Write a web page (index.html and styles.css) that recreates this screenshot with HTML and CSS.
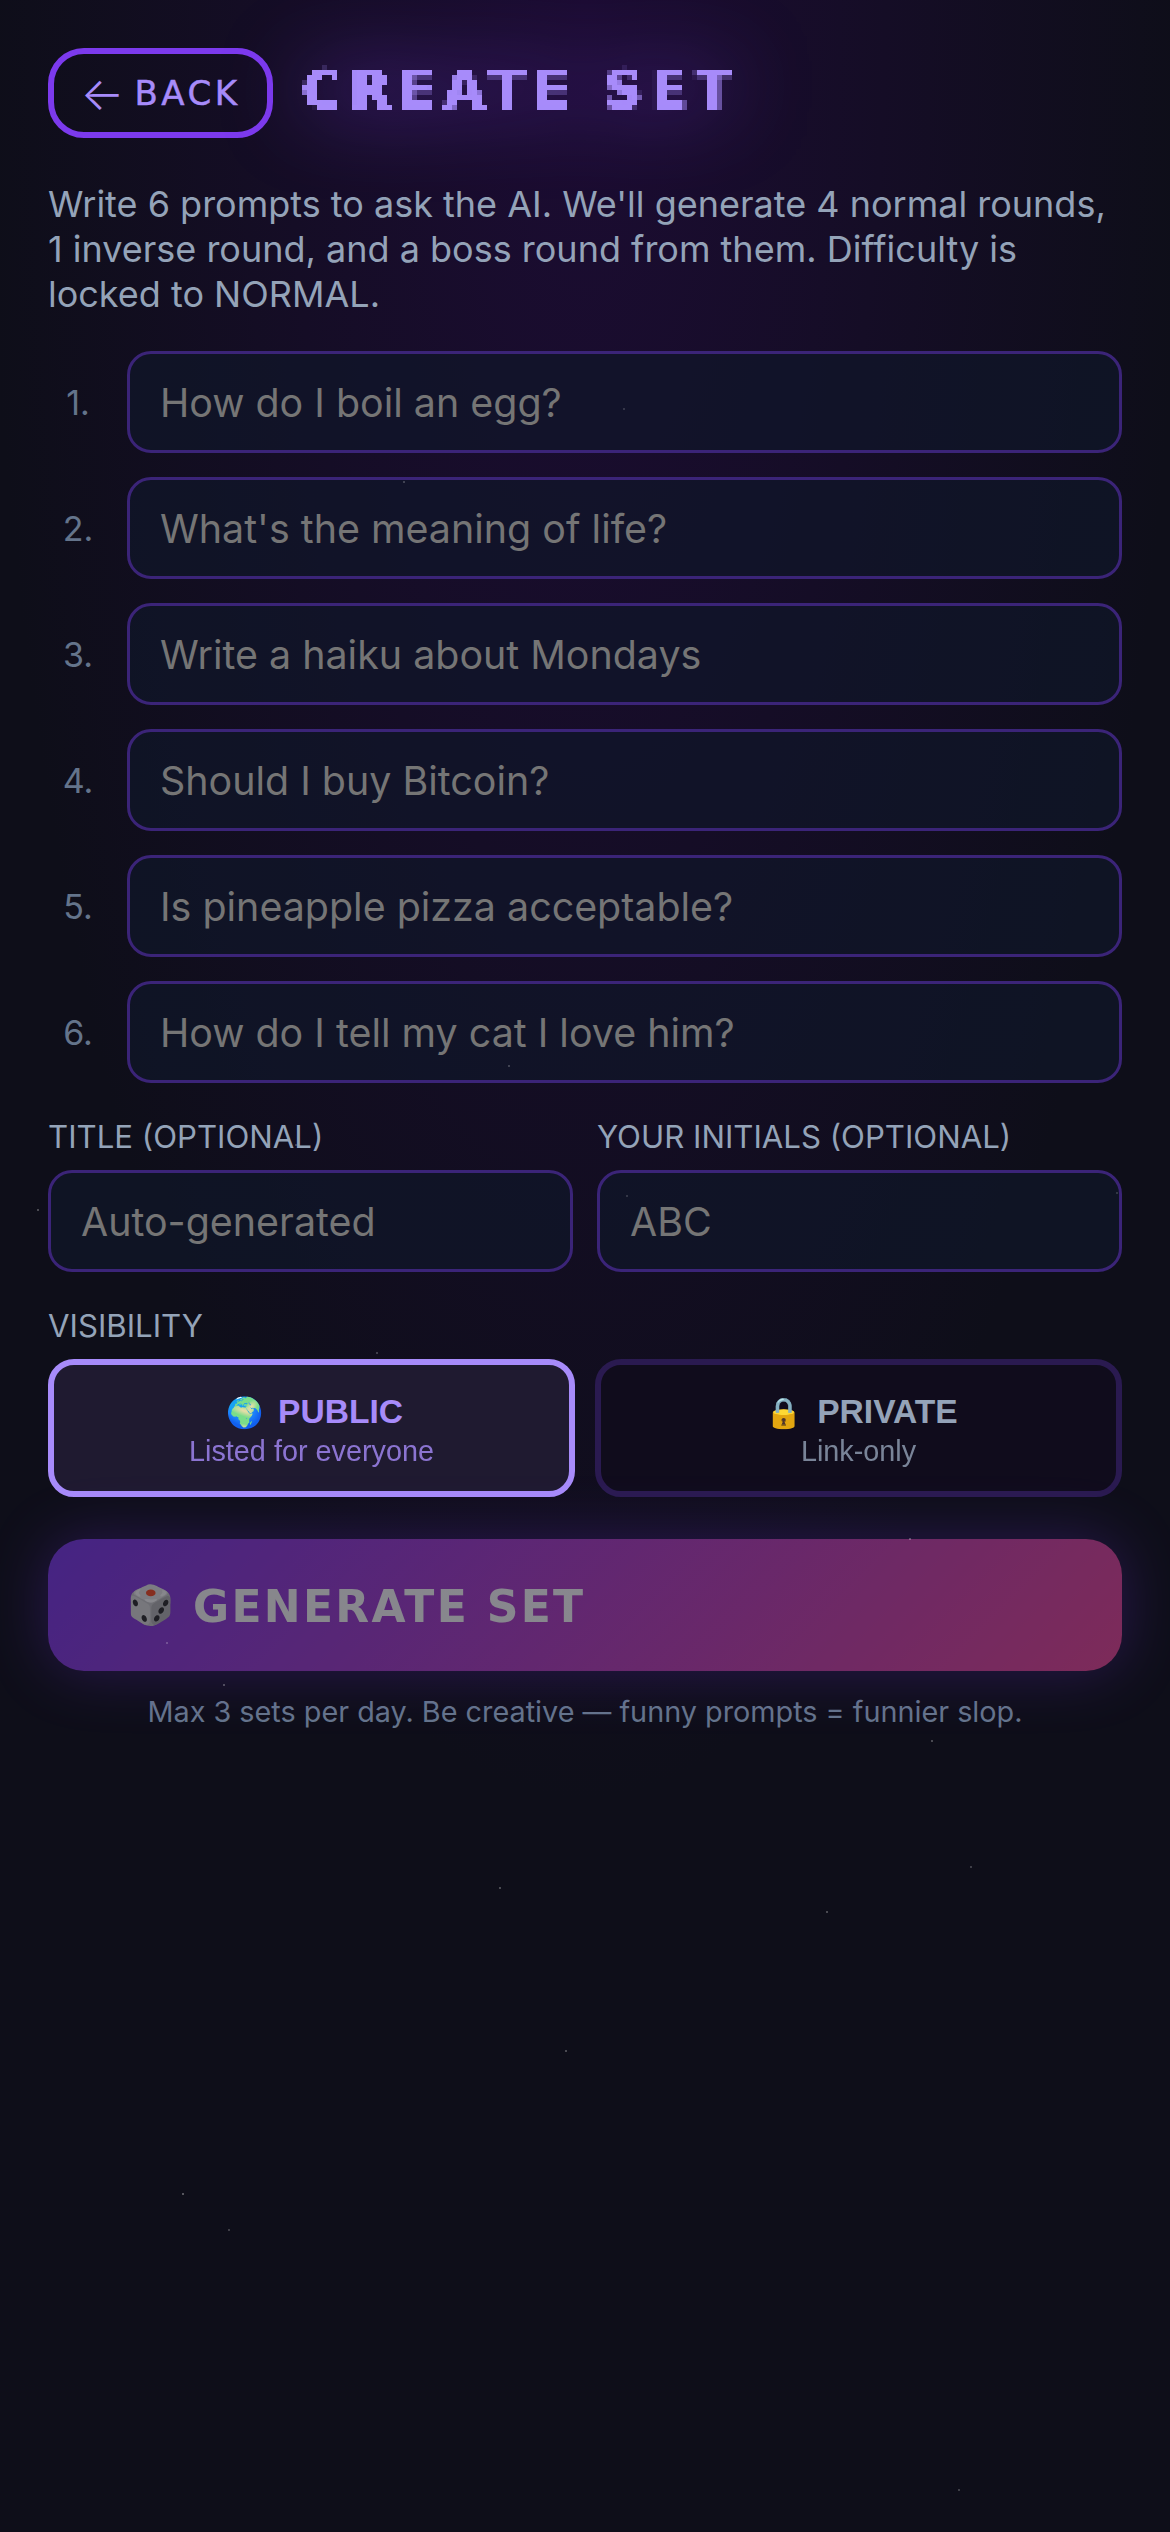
FILE: index.html
```html
<!DOCTYPE html>
<html lang="en">
<head>
<meta charset="utf-8">
<title>Create Set</title>
<link rel="stylesheet" href="styles.css">
</head>
<body>
<svg class="defs" width="0" height="0" aria-hidden="true">
  <filter id="pixelate" x="0" y="0" width="100%" height="100%" color-interpolation-filters="sRGB">
    <feFlood x="2" y="2" width="1" height="1"/>
    <feComposite width="5" height="5"/>
    <feTile result="grid"/>
    <feComposite in="SourceGraphic" in2="grid" operator="in"/>
    <feMorphology operator="dilate" radius="2"/>
  </filter>
</svg>
<div class="stars"></div>
<main class="page">
  <header class="top">
    <button class="back"><span class="arrow">←</span><span>BACK</span></button>
    <h1 class="title"><span>CREATE SET</span></h1>
  </header>
  <p class="intro">Write 6 prompts to ask the AI. We'll generate 4 normal rounds, 1 inverse round, and a boss round from them. Difficulty is locked to NORMAL.</p>
  <div class="prompts">
    <div class="prompt"><span class="num">1.</span><input class="field" placeholder="How do I boil an egg?"></div>
    <div class="prompt"><span class="num">2.</span><input class="field" placeholder="What's the meaning of life?"></div>
    <div class="prompt"><span class="num">3.</span><input class="field" placeholder="Write a haiku about Mondays"></div>
    <div class="prompt"><span class="num">4.</span><input class="field" placeholder="Should I buy Bitcoin?"></div>
    <div class="prompt"><span class="num">5.</span><input class="field" placeholder="Is pineapple pizza acceptable?"></div>
    <div class="prompt"><span class="num">6.</span><input class="field" placeholder="How do I tell my cat I love him?"></div>
  </div>
  <div class="meta">
    <label class="meta-col"><span class="label">TITLE (OPTIONAL)</span><input class="field" placeholder="Auto-generated"></label>
    <label class="meta-col"><span class="label">YOUR INITIALS (OPTIONAL)</span><input class="field" placeholder="ABC"></label>
  </div>
  <div class="label vis-label">VISIBILITY</div>
  <div class="vis">
    <button class="vis-btn on"><span class="vis-name"><span class="vis-emoji">🌍</span>PUBLIC</span><span class="vis-sub">Listed for everyone</span></button>
    <button class="vis-btn"><span class="vis-name"><span class="vis-emoji">🔒</span>PRIVATE</span><span class="vis-sub">Link-only</span></button>
  </div>
  <button class="generate"><span class="dice">🎲</span><span class="gen-text">GENERATE SET</span></button>
  <p class="hint">Max 3 sets per day. Be creative — funny prompts = funnier slop.</p>
</main>
</body>
</html>
```
FILE: styles.css
```css
* { box-sizing: border-box; }
html, body { margin: 0; padding: 0; }
body {
  width: 1170px;
  height: 2532px;
  overflow: hidden;
  position: relative;
  font-family: Inter, "Liberation Sans", sans-serif;
  background:
    radial-gradient(ellipse 600px 1800px at 50% 0, #1c0c33, rgba(28, 12, 51, 0) 100%),
    #0e0e19;
}
.defs { position: absolute; }
.stars {
  position: absolute;
  left: 0; top: 0;
  width: 2px; height: 2px;
  z-index: 5;
  pointer-events: none;
  box-shadow:
    37px 1209px 0 rgba(255,255,255,.25),
    376px 1352px 0 rgba(255,255,255,.2),
    909px 1538px 0 rgba(255,255,255,.25),
    931px 1740px 0 rgba(255,255,255,.25),
    499px 1887px 0 rgba(255,255,255,.25),
    826px 1911px 0 rgba(255,255,255,.25),
    970px 1866px 0 rgba(255,255,255,.2),
    565px 2050px 0 rgba(255,255,255,.25),
    182px 2193px 0 rgba(255,255,255,.3),
    228px 2229px 0 rgba(255,255,255,.2),
    958px 2489px 0 rgba(255,255,255,.2),
    223px 1684px 0 rgba(255,255,255,.25),
    166px 1642px 0 rgba(255,255,255,.2),
    403px 481px 0 rgba(255,255,255,.2),
    623px 408px 0 rgba(255,255,255,.15),
    508px 1065px 0 rgba(255,255,255,.2),
    626px 1195px 0 rgba(255,255,255,.15),
    1116px 1192px 0 rgba(255,255,255,.15),
    295px 1144px 0 rgba(255,255,255,.2);
}
.page {
  padding: 48px;
  display: flex;
  flex-direction: column;
}
.top {
  display: flex;
  align-items: center;
  gap: 29px;
  height: 90px;
}
.back {
  width: 225px;
  height: 90px;
  border: 6px solid #7c3aed;
  border-radius: 36px;
  background: transparent;
  color: #a78bfa;
  font-family: "DejaVu Sans", sans-serif;
  font-size: 34px;
  letter-spacing: 3.5px;
  -webkit-text-stroke: .5px #a78bfa;
  display: flex;
  align-items: center;
  justify-content: center;
  gap: 10px;
  padding: 0;
}
.arrow {
  font-family: Inter, sans-serif;
  font-size: 46px;
  font-weight: 300;
  letter-spacing: 0;
  -webkit-text-stroke: 0;
}
.title {
  margin: 0 0 6px;
  font-family: "DejaVu Sans", sans-serif;
  font-weight: 700;
  font-size: 54px;
  letter-spacing: 7.7px;
  line-height: 60px;
  white-space: pre;
  color: #a78bfa;
  -webkit-text-stroke: 1.5px #a78bfa;
  filter: drop-shadow(0 0 40px rgba(124, 58, 237, .7));
}
.title span { display: block; filter: url(#pixelate); }
.intro {
  margin: 44px 0 0;
  font-size: 36px;
  line-height: 45px;
  color: #94a3b8;
}
.prompts {
  margin-top: 34px;
  display: flex;
  flex-direction: column;
  gap: 24px;
}
.prompt { display: flex; align-items: center; gap: 19px; }
.num {
  width: 60px;
  flex: none;
  text-align: center;
  font-size: 34px;
  color: #64748b;
}
.field {
  flex: 1 0 auto;
  width: 0;
  min-width: 0;
  height: 102px;
  padding: 2px 30px 0;
  border: 3px solid #3b2478;
  border-radius: 24px;
  background: rgba(15, 23, 42, .7);
  color: #fff;
  font-family: Inter, sans-serif;
  font-size: 39.4px;
  outline: none;
}
.field::placeholder { color: #757575; opacity: 1; }
.meta {
  margin-top: 34px;
  display: grid;
  grid-template-columns: 1fr 1fr;
  gap: 24px;
}
.meta-col { display: flex; flex-direction: column; gap: 13px; min-width: 0; }
.meta-col .field { flex: none; width: 100%; }
.label {
  font-size: 31.2px;
  line-height: 40px;
  color: #94a3b8;
}
.vis-label { margin-top: 34px; }
.vis {
  margin-top: 13px;
  display: grid;
  grid-template-columns: 1fr 1fr;
  gap: 20px;
}
.vis-btn {
  height: 138px;
  border: 6px solid #2a1a50;
  border-radius: 26px;
  background: #100c1c;
  color: #94a3b8;
  font-family: "Liberation Sans", Arial, sans-serif;
  display: flex;
  flex-direction: column;
  align-items: center;
  justify-content: center;
  padding: 2px 0 0;
}
.vis-btn.on { border-color: #a78bfa; background: #1f1a30; color: #a78bfa; }
.vis-name { font-size: 33.6px; font-weight: 700; line-height: 42px; padding-left: 6px; }
.vis-emoji { font-size: 30px; margin-right: 15px; }
.vis-sub { font-size: 28.8px; line-height: 34px; opacity: .8; }
.generate {
  margin-top: 42px;
  height: 132px;
  border: 0;
  border-radius: 36px;
  background: linear-gradient(135deg, #7c3aed, #ec4899);
  box-shadow: 0 0 60px rgba(124, 58, 237, .5);
  color: #fff;
  opacity: .5;
  font-family: "DejaVu Sans", sans-serif;
  font-weight: 700;
  font-size: 44px;
  letter-spacing: 2.3px;
  text-align: left;
  padding: 0 0 0 79px;
  display: flex;
  align-items: center;
  gap: 19px;
}
.dice { font-size: 38px; letter-spacing: 0; }
.gen-text { padding-top: 3px; }
.hint {
  margin: 22px 0 0;
  text-align: center;
  font-size: 28.8px;
  line-height: 38px;
  color: #64748b;
}
```
